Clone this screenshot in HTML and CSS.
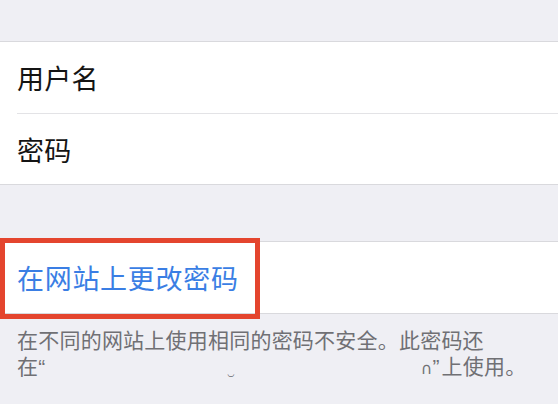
FILE: index.html
```html
<!DOCTYPE html>
<html lang="zh-CN">
<head>
<meta charset="utf-8">
<link rel="stylesheet" href="styles.css">
</head>
<body>
<div class="page">
  <div class="gap-top"></div>
  <div class="group">
    <div class="row first"><span class="label">用户名</span></div>
    <div class="row"><span class="label">密码</span></div>
  </div>
  <div class="gap-mid"></div>
  <div class="group change">
    <div class="row first link"><span class="label blue">在网站上更改密码</span></div>
    <div class="highlight"></div>
  </div>
  <div class="footer">
    <p class="note">在不同的网站上使用相同的密码不安全。此密码还</p>
    <p class="note">在<span class="latin">“</span><span class="blank1"></span><span class="smudge">‿</span><span class="blank2"></span><span class="cut">∩</span><span class="latin">”</span>上使用。</p>
  </div>
</div>
</body>
</html>
```
FILE: styles.css
```css
html, body {
  margin: 0;
  padding: 0;
}
body {
  background: #efeff4;
  font-family: "Noto Sans CJK SC", "Noto Sans", sans-serif;
  width: 558px;
  height: 404px;
  overflow: hidden;
}
.page {
  display: flex;
  flex-direction: column;
}
.gap-top {
  height: 41px;
}
.group {
  background: #ffffff;
  border-top: 1px solid #d9d9dd;
  border-bottom: 1px solid #d9d9dd;
  position: relative;
}
.row {
  height: 70px;
  display: flex;
  align-items: center;
  padding-left: 17px;
  position: relative;
}
.row.first {
  height: 71px;
}
.row + .row {
  border-top: 1px solid transparent;
}
.row + .row::before {
  content: "";
  position: absolute;
  left: 17px;
  right: 0;
  top: -1px;
  height: 1px;
  background: #e3e3e6;
}
.label {
  font-size: 27px;
  color: #141414;
  line-height: 1;
  letter-spacing: 0.3px;
}
.label.blue {
  color: #3a7ee4;
  letter-spacing: 0.7px;
}
.gap-mid {
  height: 56px;
}
.highlight {
  position: absolute;
  left: 0;
  top: -4px;
  width: 250px;
  height: 71px;
  border: 5px solid #e4452e;
  pointer-events: none;
}
.footer {
  padding: 12px 17px 0 17px;
}
.note {
  margin: 0;
  font-size: 21px;
  line-height: 26px;
  height: 26px;
  color: #707074;
  white-space: nowrap;
  letter-spacing: 0.22px;
}
.latin {
  font-family: "Liberation Sans", sans-serif;
  letter-spacing: 0;
  margin-right: 2px;
}
.blank1 {
  display: inline-block;
  width: 180px;
}
.blank2 {
  display: inline-block;
  width: 186px;
}
.smudge {
  font-size: 12px;
  color: #707074;
}
.cut {
  font-family: "DejaVu Sans", sans-serif;
  font-size: 16px;
  letter-spacing: 0;
}
```
